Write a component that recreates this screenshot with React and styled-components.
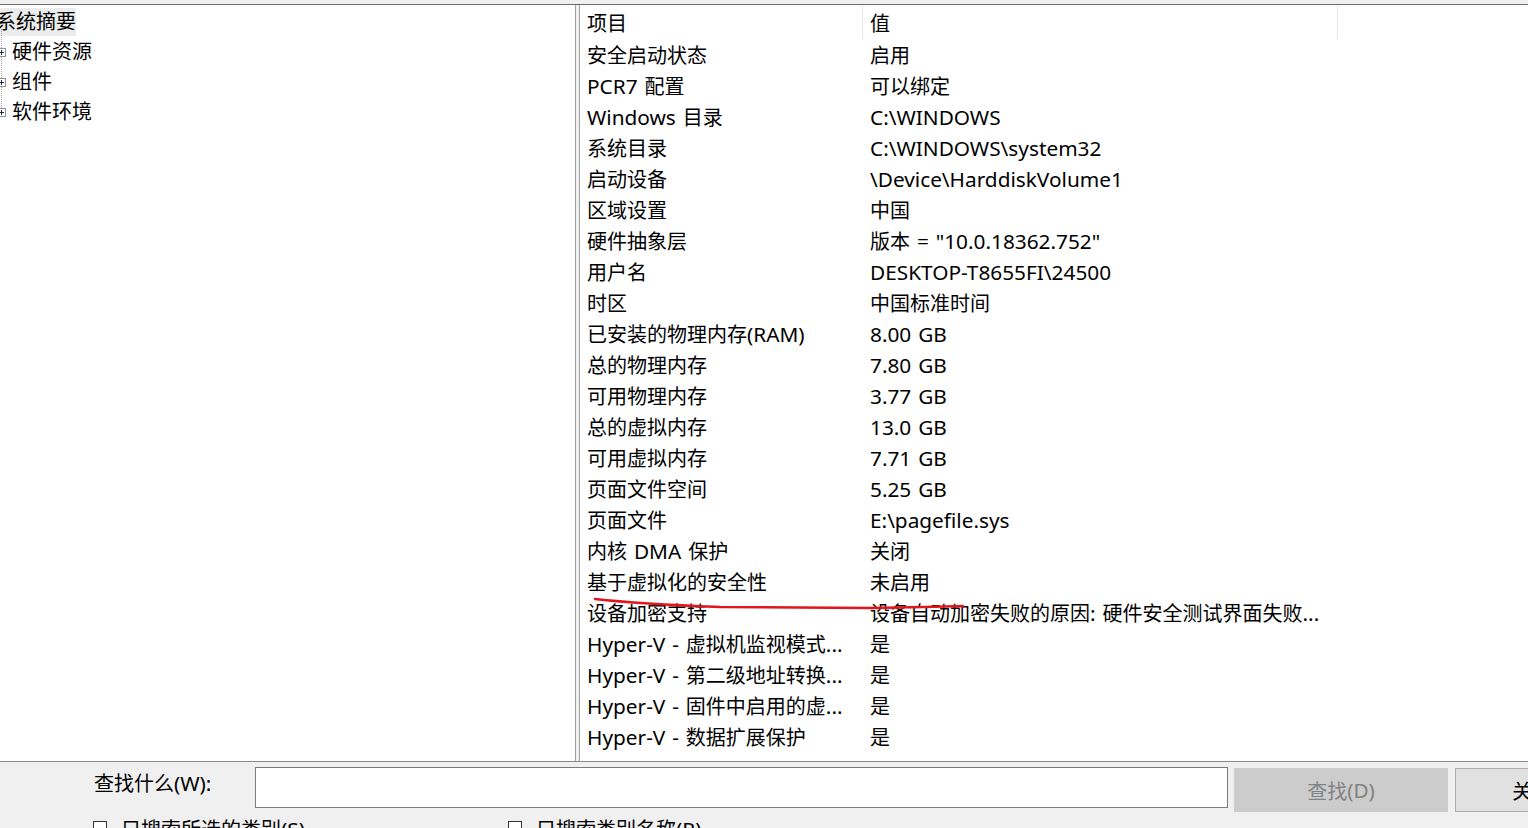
import React from "react";
import styled, { createGlobalStyle } from "styled-components";

const GlobalStyle = createGlobalStyle`
  html, body { margin: 0; padding: 0; background: #f0f0f0; overflow: hidden; }
  * { box-sizing: border-box; }
  body { font-family: "Noto Sans", "Noto Sans CJK SC", sans-serif; color: #000; }
`;

const Window = styled.div`
  position: relative;
  width: 1528px;
  height: 828px;
  overflow: hidden;
  display: flex;
  flex-direction: column;
  background: #f0f0f0;
  font-size: 20px;
`;

const TopStrip = styled.div`
  height: 4px;
  flex: none;
`;

const Main = styled.div`
  flex: none;
  height: 758px;
  display: flex;
  gap: 3px;
  border-top: 1px solid #6a6a6a;
  border-bottom: 1px solid #8a8a8a;
`;

const LeftPane = styled.div`
  width: 576px;
  flex: none;
  background: #fff;
  border-right: 1px solid #a0a0a0;
  overflow: hidden;
`;

const RightPane = styled.div`
  flex: 1;
  min-width: 0;
  background: #fff;
  border-left: 1px solid #a0a0a0;
  overflow: hidden;
  padding-top: 1px;
`;

const Latin = styled.span`
  font-size: 20.8px;
  word-spacing: 1.5px;
`;

const Txt = ({ children }) => {
  const parts = String(children).split(/([\x00-\x7F]+)/);
  return parts.map((p, i) =>
    /^[\x00-\x7F]+$/.test(p) ? <Latin key={i}>{p}</Latin> : <React.Fragment key={i}>{p}</React.Fragment>
  );
};

const Tree = styled.div`
  margin-left: -4px;
  padding-top: 2px;
`;

const TreeRow = styled.div`
  height: 30px;
  display: flex;
  align-items: center;
  white-space: nowrap;
  padding-left: ${(p) => (p.$child ? "1px" : "0")};
`;

const TreeLabel = styled.span`
  display: inline-block;
  height: 28px;
  line-height: 28px;
  background: ${(p) => (p.$selected ? "#ececec" : "transparent")};
`;

const ChildGroup = styled.div`
  position: relative;
  &::before {
    content: "";
    position: absolute;
    left: 5px;
    top: -8px;
    bottom: 15px;
    border-left: 1px dotted #a0a0a0;
  }
`;

const Expander = styled.svg`
  flex: none;
  width: 9px;
  height: 9px;
  margin-right: 6px;
  position: relative;
  z-index: 1;
`;

const PlusBox = () => (
  <Expander viewBox="0 0 9 9">
    <rect x="0.5" y="0.5" width="8" height="8" fill="#fff" stroke="#919191" />
    <path d="M2 4.5h5M4.5 2v5" stroke="#1e2a44" strokeWidth="1" />
  </Expander>
);

const HeaderRow = styled.div`
  height: 33px;
  display: flex;
`;

const HeaderCell = styled.div`
  flex: none;
  width: ${(p) => p.$w}px;
  padding-left: 7px;
  display: flex;
  align-items: center;
  border-right: 1px solid #e5e5e5;
  white-space: nowrap;
`;

const HeaderFill = styled.div`
  flex: 1;
`;

const Row = styled.div`
  height: 31px;
  display: flex;
  align-items: center;
  white-space: nowrap;
`;

const Cell = styled.div`
  flex: none;
  width: ${(p) => p.$w}px;
  padding-left: 7px;
  overflow: hidden;
  white-space: nowrap;
`;

const Bottom = styled.div`
  flex: 1;
  display: flex;
  flex-direction: column;
  padding-top: 5px;
`;

const SearchRow = styled.div`
  display: flex;
  align-items: flex-start;
  padding-left: 94px;
  white-space: nowrap;
`;

const SearchLabel = styled.div`
  flex: none;
  width: 161px;
  height: 32px;
  line-height: 32px;
`;

const SearchInput = styled.div`
  flex: none;
  width: 973px;
  height: 41px;
  background: #fff;
  border: 1px solid #7a7a7a;
  margin-right: 6px;
`;

const Button = styled.div`
  flex: none;
  width: ${(p) => p.$w}px;
  height: 44px;
  margin-top: 1px;
  margin-right: 7px;
  display: flex;
  align-items: center;
  justify-content: center;
  background: ${(p) => (p.$disabled ? "#cccccc" : "#e1e1e1")};
  border: 1px solid ${(p) => (p.$disabled ? "#cccccc" : "#adadad")};
  color: ${(p) => (p.$disabled ? "#838383" : "#000")};
`;

const CheckRow = styled.div`
  display: flex;
  padding-left: 93px;
  margin-top: 7px;
  white-space: nowrap;
`;

const CheckItem = styled.div`
  display: flex;
  align-items: flex-start;
  width: ${(p) => p.$w}px;
  flex: none;
`;

const CheckBox = styled.div`
  flex: none;
  width: 14px;
  height: 14px;
  border: 1px solid #333;
  background: #fff;
  margin-top: 2px;
  margin-right: 14px;
`;

const CheckText = styled.span`
  line-height: 20px;
`;

const Annotation = styled.svg`
  position: absolute;
  left: 0;
  top: 0;
  pointer-events: none;
`;

const rows = [
  ["安全启动状态", "启用"],
  ["PCR7 配置", "可以绑定"],
  ["Windows 目录", "C:\\WINDOWS"],
  ["系统目录", "C:\\WINDOWS\\system32"],
  ["启动设备", "\\Device\\HarddiskVolume1"],
  ["区域设置", "中国"],
  ["硬件抽象层", "版本 = \"10.0.18362.752\""],
  ["用户名", "DESKTOP-T8655FI\\24500"],
  ["时区", "中国标准时间"],
  ["已安装的物理内存(RAM)", "8.00 GB"],
  ["总的物理内存", "7.80 GB"],
  ["可用物理内存", "3.77 GB"],
  ["总的虚拟内存", "13.0 GB"],
  ["可用虚拟内存", "7.71 GB"],
  ["页面文件空间", "5.25 GB"],
  ["页面文件", "E:\\pagefile.sys"],
  ["内核 DMA 保护", "关闭"],
  ["基于虚拟化的安全性", "未启用"],
  ["设备加密支持", "设备自动加密失败的原因: 硬件安全测试界面失败..."],
  ["Hyper-V - 虚拟机监视模式...", "是"],
  ["Hyper-V - 第二级地址转换...", "是"],
  ["Hyper-V - 固件中启用的虚...", "是"],
  ["Hyper-V - 数据扩展保护", "是"],
];

export default function App() {
  return (
    <>
      <GlobalStyle />
      <Window>
        <TopStrip />
        <Main>
          <LeftPane>
            <Tree>
              <TreeRow>
                <TreeLabel $selected>系统摘要</TreeLabel>
              </TreeRow>
              <ChildGroup>
                {["硬件资源", "组件", "软件环境"].map((t) => (
                  <TreeRow $child key={t}>
                    <PlusBox />
                    <TreeLabel>{t}</TreeLabel>
                  </TreeRow>
                ))}
              </ChildGroup>
            </Tree>
          </LeftPane>
          <RightPane>
            <HeaderRow>
              <HeaderCell $w={283}>项目</HeaderCell>
              <HeaderCell $w={475}>值</HeaderCell>
              <HeaderFill />
            </HeaderRow>
            {rows.map(([k, v]) => (
              <Row key={k}>
                <Cell $w={283}><Txt>{k}</Txt></Cell>
                <Cell $w={475}><Txt>{v}</Txt></Cell>
              </Row>
            ))}
          </RightPane>
        </Main>
        <Bottom>
          <SearchRow>
            <SearchLabel><Txt>查找什么(W):</Txt></SearchLabel>
            <SearchInput />
            <Button $w={214} $disabled><Txt>查找(D)</Txt></Button>
            <Button $w={180}><Txt>关闭(C)</Txt></Button>
          </SearchRow>
          <CheckRow>
            <CheckItem $w={415}>
              <CheckBox />
              <CheckText><Txt>只搜索所选的类别(S)</Txt></CheckText>
            </CheckItem>
            <CheckItem $w={400}>
              <CheckBox />
              <CheckText><Txt>只搜索类别名称(R)</Txt></CheckText>
            </CheckItem>
          </CheckRow>
        </Bottom>
        <Annotation width="1528" height="828" viewBox="0 0 1528 828">
          <path
            d="M595 599 Q 640 604 720 607 L 870 608 Q 930 607 963 606"
            fill="none"
            stroke="#e3141c"
            strokeWidth="2.5"
            strokeLinecap="round"
          />
        </Annotation>
      </Window>
    </>
  );
}
